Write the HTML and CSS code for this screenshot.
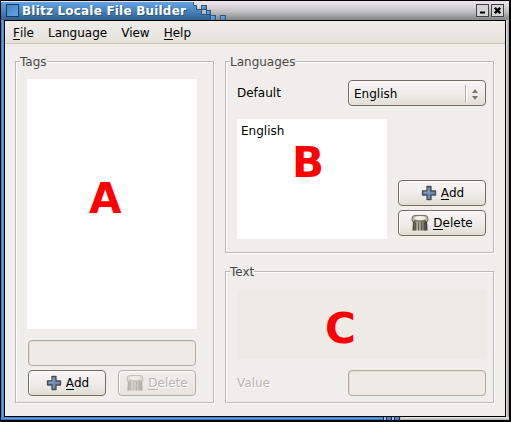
FILE: index.html
```html
<!DOCTYPE html>
<html lang="en">
<head>
<meta charset="utf-8">
<title>Blitz Locale File Builder</title>
<link rel="stylesheet" href="styles.css">
</head>
<body>
<svg class="defs" width="0" height="0">
  <defs>
    <linearGradient id="bin" x1="0" x2="1" y1="0" y2="0">
      <stop offset="0" stop-color="#35352d"/><stop offset=".35" stop-color="#b5b5a2"/><stop offset=".65" stop-color="#87877a"/><stop offset="1" stop-color="#30302a"/>
    </linearGradient>
    <linearGradient id="pixel" x1="0" x2="1" y1="0" y2="1">
      <stop offset="0" stop-color="#79b5ea"/><stop offset="1" stop-color="#3a78b4"/>
    </linearGradient>
    <linearGradient id="titleblue" x1="0" x2="0" y1="0" y2="1">
      <stop offset="0" stop-color="#62a4e2"/><stop offset=".5" stop-color="#4984bc"/><stop offset="1" stop-color="#2f5f8e"/>
    </linearGradient>
    <symbol id="plus" viewBox="0 0 16 16">
      <path d="M6 1.500h4V6h4.500v4H10v4.500H6V10H1.500V6H6z" fill="#6c8cb4" stroke="#444c56" stroke-width="1.300" stroke-linejoin="round"/>
      <path d="M7.200 3v4.200H3" fill="none" stroke="#86a3c9"/>
    </symbol>
    <symbol id="trash" viewBox="0 0 18 18">
      <path d="M2 5h14l.5 11.500H1.500z" fill="url(#bin)"/>
      <path d="M4.500 8v8.500M7.500 8v8.500M10.500 8v8.500M13.500 8v8.500" stroke="#4c4c41" stroke-width=".7"/>
      <path d="M1 4.500Q1 1.500 4 1.500h10q3 0 3 3V7q-1 1.500-3-.5-5 1.500-10 0Q2 8.500 1 7z" fill="#b9b9a7" stroke="#5d5d50" stroke-width=".8"/>
      <ellipse cx="9" cy="4" rx="5.500" ry="2" fill="#efefe3"/>
    </symbol>
  </defs>
</svg>
<div class="window">
  <header class="titlebar">
    <div class="caption"><span class="sysmenu"></span><span>Blitz Locale File Builder</span></div>
    <svg class="pixels" width="42" height="18" viewBox="0 0 42 18">
      <path d="M0 0h5v4h4v4h5v5h8v5H0z" fill="url(#titleblue)"/>
      <path d="M5.500 0v3.500h3v4h5v5h8" fill="none" stroke="#2b5580"/>
      <g fill="url(#pixel)" stroke="#2b5580">
        <rect x="13.500" y="3.500" width="5" height="4"/><rect x="18.500" y="8.500" width="4" height="4"/>
        <rect x="22.500" y="13.500" width="5" height="5"/><rect x="32.500" y="13.500" width="5" height="5"/>
      </g>
    </svg>
    <div class="controls">
      <svg width="13" height="13"><rect class="key" x=".5" y=".5" width="12" height="12"/><path d="M4 8.500h5" stroke="#000" stroke-width="2"/></svg>
      <svg width="13" height="13"><rect class="key" x=".5" y=".5" width="12" height="12"/><path d="M3.800 3.800l5.400 5.400M9.200 3.800L3.800 9.200" stroke="#000" stroke-width="2.400"/></svg>
    </div>
  </header>
  <div class="client">
    <nav class="menu"><span><u>F</u>ile</span><span>Language</span><span>View</span><span><u>H</u>elp</span></nav>
    <main class="panes">
      <section class="group tags">
        <h2>Tags</h2>
        <div class="list"><span class="mark mark-a">A</span></div>
        <div class="field"></div>
        <div class="row">
          <div class="button"><svg class="plus"><use href="#plus"/></svg><span><u>A</u>dd</span></div>
          <div class="button disabled"><svg class="trash"><use href="#trash"/></svg><span><u>D</u>elete</span></div>
        </div>
      </section>
      <div class="column">
        <section class="group languages">
          <h2>Languages</h2>
          <div class="row spread">
            <span>Default</span>
            <div class="select"><span>English</span><svg width="20" height="18"><path d="M.5 0v18" stroke="#b6b1a8"/><path d="M1.500 0v18" stroke="#fff"/><path d="M7 8l3-4 3 4zM7 11l3 4 3-4z" fill="#7c776c"/></svg></div>
          </div>
          <div class="row entries">
            <div class="list">English<span class="mark mark-b">B</span></div>
            <div class="stack">
              <div class="button"><svg class="plus"><use href="#plus"/></svg><span><u>A</u>dd</span></div>
              <div class="button"><svg class="trash"><use href="#trash"/></svg><span><u>D</u>elete</span></div>
            </div>
          </div>
        </section>
        <section class="group text">
          <h2>Text</h2>
          <div class="area"><span class="mark mark-c">C</span></div>
          <div class="row spread"><span class="dim">Value</span><div class="field"></div></div>
        </section>
      </div>
    </main>
  </div>
  <div class="footer-edge"><span class="edge-blue"></span><span class="edge-pixels"></span></div>
</div>
</body>
</html>
```
FILE: styles.css
```css
* { box-sizing: border-box; }
body { margin: 0; background: #000; font: 12px/16px "DejaVu Sans", sans-serif; color: #000; overflow: hidden; }
.defs { position: absolute; }
u { text-decoration: none; box-shadow: 0 1px 0 currentColor; display: inline-block; height: 14px; line-height: 16px; }

.window {
  width: 508px; height: 419px; margin: 1px 0 0 1px; padding: 0 4px 0 3px;
  background: linear-gradient(90deg, #2c609b 0, #5ba1e3 1px, #5ba1e3 2px, #3c79b5 3px, #eee 4px, #eee 505px, #c9c9cb 506px, #96969b 508px);
}
.titlebar {
  height: 19px; display: flex; margin: 0 -4px 0 -3px; padding-top: 1px;
  background: linear-gradient(#e9e4ea, #d9d7da 30%, #bab9bb 60%, #858487);
}
.caption {
  width: 187px; height: 18px; display: flex; align-items: center; gap: 3px; padding: 0 0 1px 5px;
  background: linear-gradient(#62a4e2, #4984bc 50%, #2f5f8e);
  color: #fff; font-weight: bold; letter-spacing: .2px; white-space: nowrap; text-shadow: 1px 1px 0 #2c5684;
}
.sysmenu { width: 13px; height: 13px; flex: none; border: 1px solid #183b60; background: linear-gradient(135deg, #4382bd, #63a6e2); }
.pixels { flex: none; }
.controls { margin-left: auto; padding: 2px 5px 0 0; display: flex; gap: 2px; }
.key { fill: #d5d5d6; stroke: #434345; }

.client { height: 397px; border: 1px solid #000; background: #efeeea; width: 502px; }
.menu {
  height: 23px; display: flex; padding: 4px 0 0 8px; gap: 14px;
  background: linear-gradient(#efede8, #e5e3dc); border-bottom: 1px solid #c9c5b7;
}
.panes { display: flex; gap: 11px; padding: 17px 0 0 10px; }
.column { display: flex; flex-direction: column; gap: 18px; }
.group { border: 1px solid #bbbab6; box-shadow: 1px 1px 0 #fff, inset 1px 1px 0 #fff; }
.group h2 { width: max-content; height: 16px; margin: -8px 0 0 -7px; background: #efeeea; font: inherit; color: #484846; }
.tags { width: 199px; height: 342px; padding-left: 11px; }
.tags .list { width: 170px; height: 250px; margin-top: 9px; }
.tags .field { width: 168px; margin: 11px 0 4px 1px; }
.tags .row { gap: 12px; margin-left: 1px; }
.tags .button { width: 78px; }
.languages, .text { width: 269px; padding-left: 11px; }
.languages { height: 192px; }
.text { height: 132px; }
.row { display: flex; }
.spread { width: 249px; justify-content: space-between; align-items: center; }
.languages .spread { margin-top: 10px; }
.list { position: relative; background: #fff; }
.languages .list { width: 150px; height: 120px; padding: 4px; }
.entries { margin-top: 13px; gap: 11px; }
.stack { padding-top: 61px; display: flex; flex-direction: column; gap: 4px; }
.field, .button, .select { height: 26px; border: 1px solid #756f63; border-radius: 4px; }
.field { width: 138px; background: #eeebe6; border-color: #b4ab9e; box-shadow: inset 1px 1px 0 #e4dfd7; }
.button { width: 88px; display: flex; align-items: center; justify-content: center; gap: 4px; background: linear-gradient(#f7f6f4, #eeece8 55%, #e1ded6); box-shadow: inset 1px 1px 0 #fcfbfa; }
.select { width: 138px; display: flex; align-items: center; justify-content: space-between; padding: 1px 0 0 5px; background: linear-gradient(#f7f6f4, #eeece8 55%, #e1ded6); box-shadow: inset 1px 1px 0 #fcfbfa; }
.plus { width: 16px; height: 16px; }
.trash { width: 18px; height: 18px; }
.button .plus { margin-left: 1px; }
.disabled { border-color: #b8b0a5; background: linear-gradient(#f1eeeb, #e9e4df); color: #b7b5b1; text-shadow: 1px 1px 0 #fff; }
.disabled svg { opacity: .35; }
.dim { color: #b7b5b1; text-shadow: 1px 1px 0 #fff; }
.area { position: relative; width: 250px; height: 69px; margin: 10px 0 11px; background: #eeebe6; }

/* Region markers drawn over the panels */
.mark { position: absolute; color: #f00; font: bold 42px/48px "DejaVu Sans", sans-serif; }
.mark-a { left: 62px; top: 96px; }
.mark-b { left: 55px; top: 20px; }
.mark-c { left: 88px; top: 15px; }

.footer-edge { height: 3px; margin: 0 -4px 0 -3px; display: flex; background: linear-gradient(#eee, #aaa); }
.edge-blue { width: 382px; background: linear-gradient(#3976b4, #5ba1e3 50%, #2c609b); }
.edge-pixels { width: 18px; background: repeating-linear-gradient(90deg, #182e45 0, #182e45 1px, #bbb 1px, #bbb 3px, #182e45 3px, #182e45 4px, #4685c2 4px, #4685c2 8px); }
```
